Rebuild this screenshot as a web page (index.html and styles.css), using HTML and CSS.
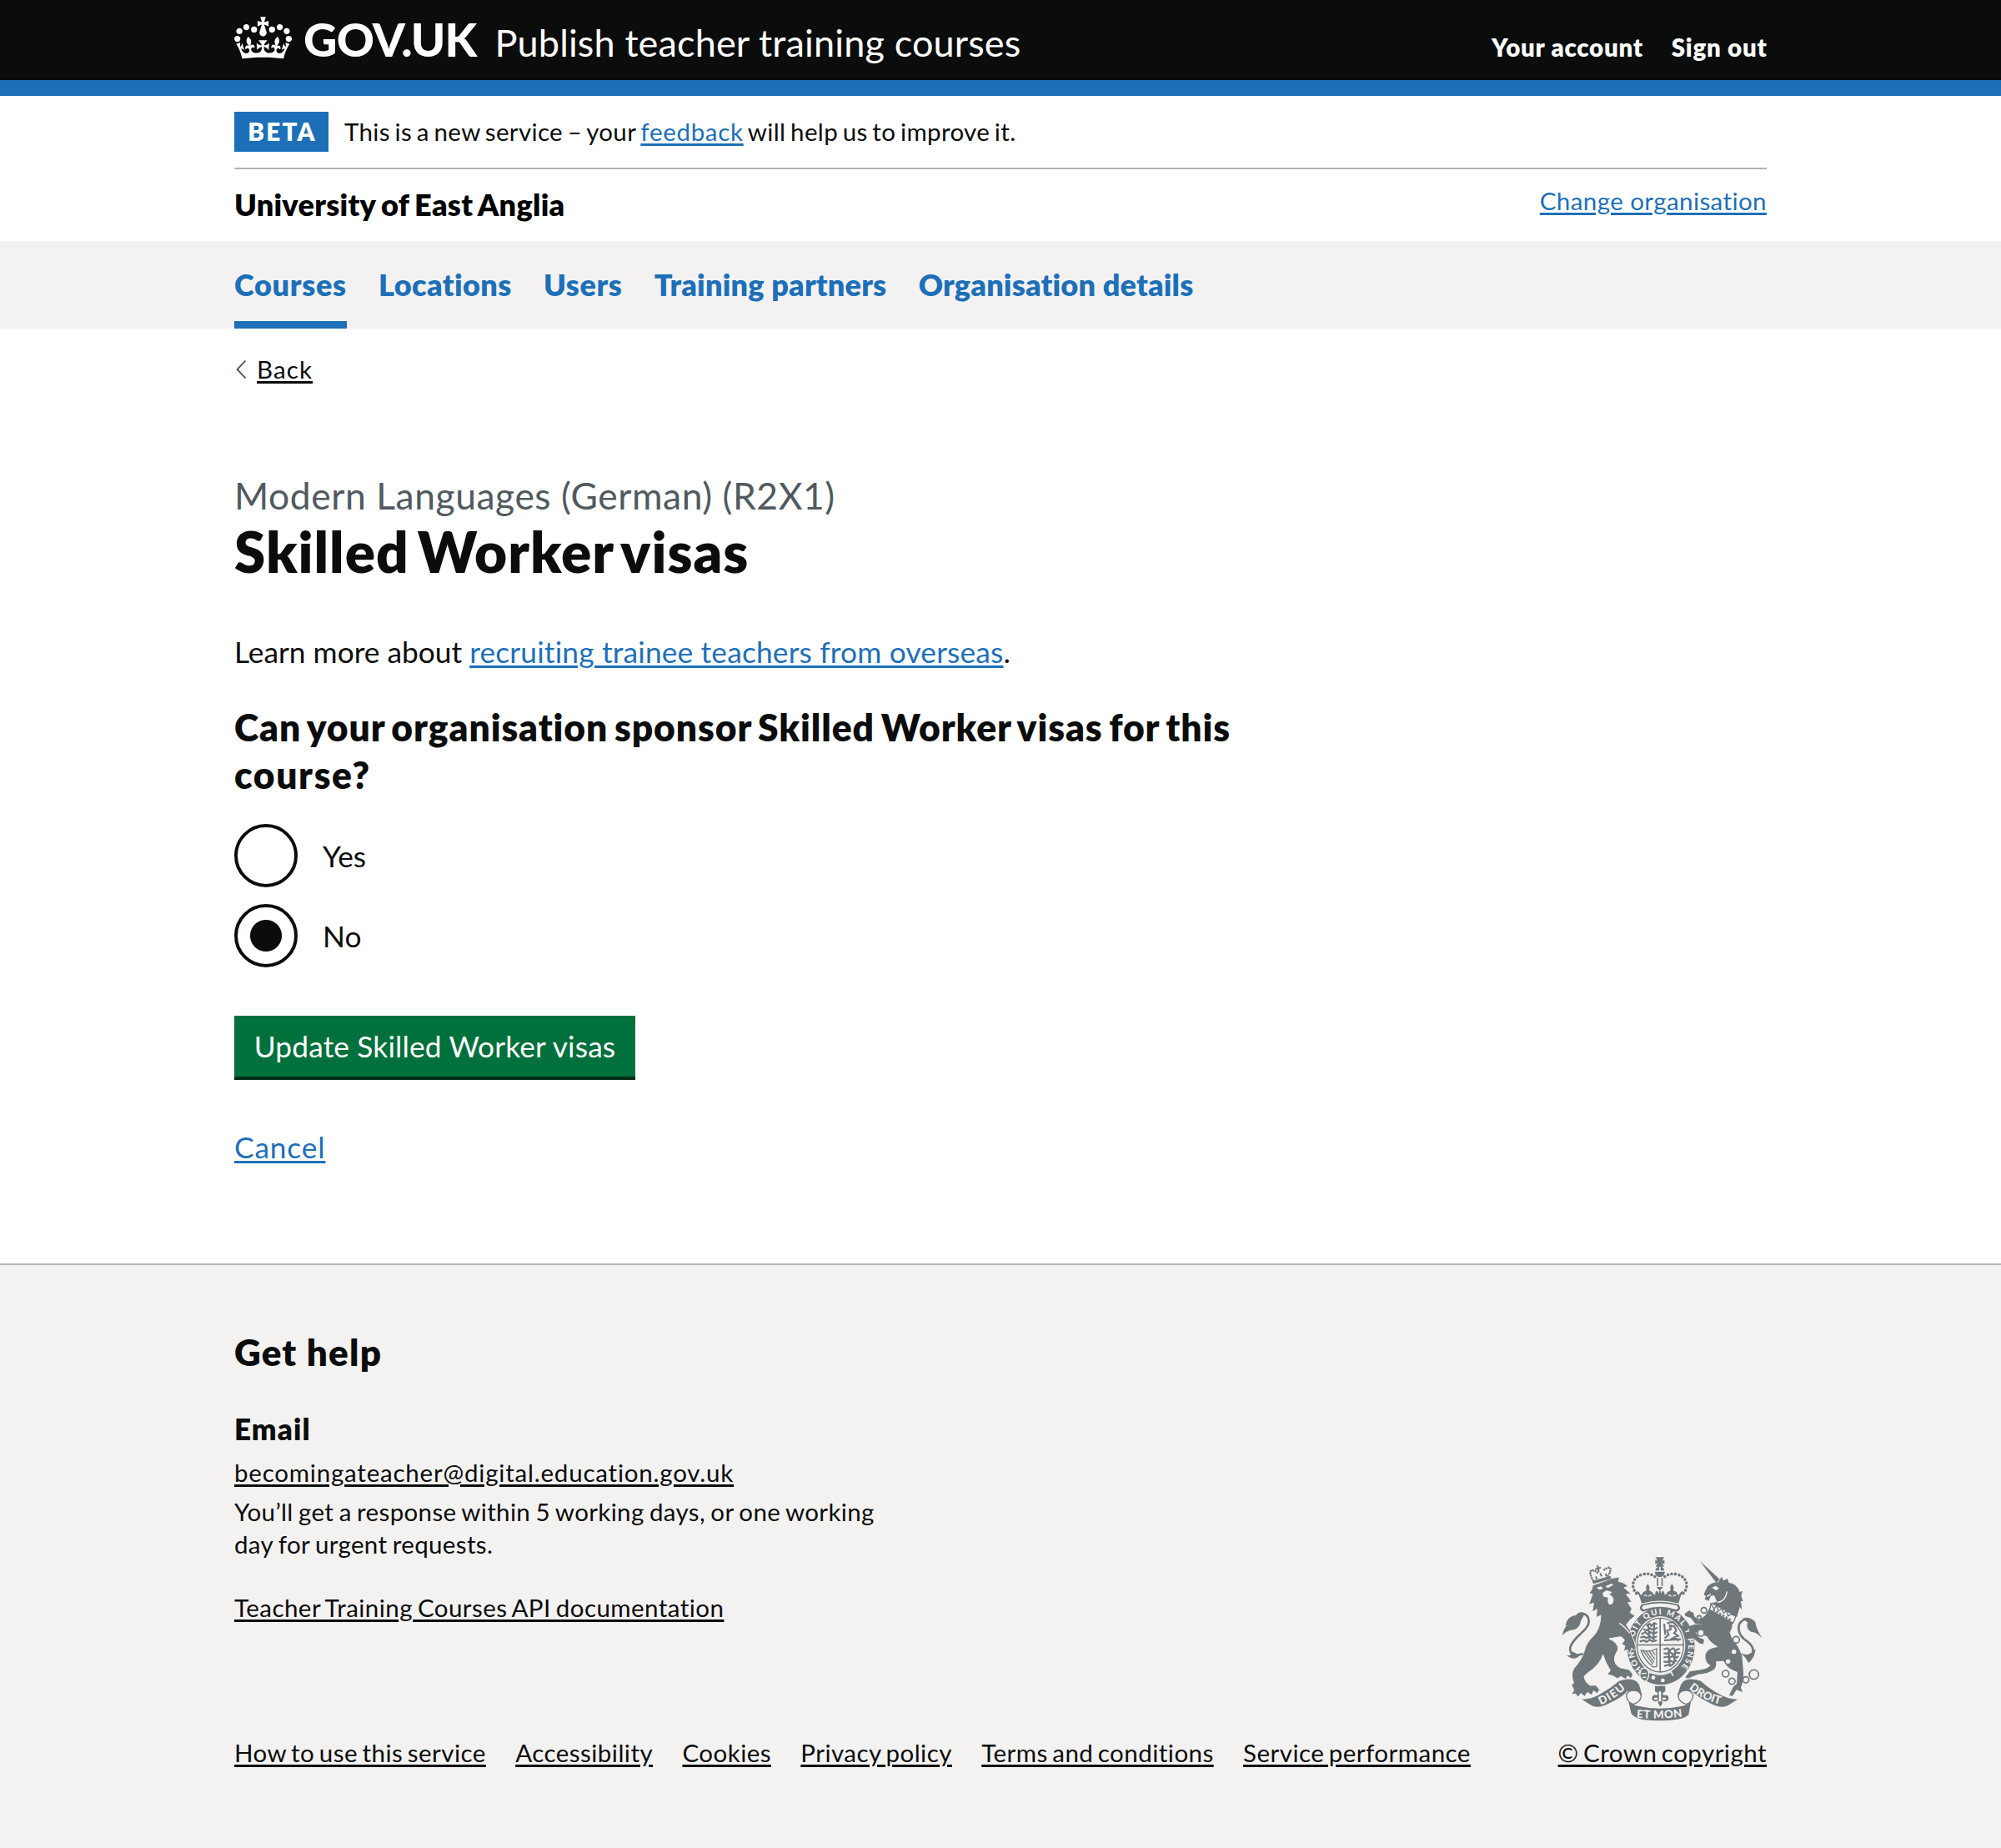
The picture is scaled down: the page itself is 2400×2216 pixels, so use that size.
FILE: index.html
```html
<!DOCTYPE html>
<html lang="en">
<head>
<meta charset="utf-8">
<title>Skilled Worker visas - Publish teacher training courses</title>
<link rel="stylesheet" href="styles.css">
</head>
<body>
<header class="header">
  <div class="container header-inner">
    <svg class="crown" viewBox="0 0 132 97" aria-hidden="true"><path fill="#fff" d="M25 30.2c3.5 1.5 7.7-.2 9.1-3.7 1.5-3.6-.2-7.8-3.9-9.2-3.6-1.4-7.6.3-9.1 3.9-1.4 3.5.3 7.5 3.9 9zM9 39.5c3.6 1.5 7.8-.2 9.2-3.7 1.5-3.6-.2-7.8-3.9-9.1-3.6-1.5-7.6.2-9.1 3.8-1.4 3.5.3 7.5 3.8 9zM4.4 57.2c3.5 1.5 7.7-.2 9.1-3.8 1.5-3.6-.2-7.7-3.9-9.1-3.5-1.5-7.6.3-9.1 3.8-1.4 3.5.3 7.6 3.9 9.1zm38.3-21.4c3.5 1.5 7.7-.2 9.1-3.8 1.5-3.6-.2-7.7-3.9-9.1-3.6-1.5-7.6.3-9.1 3.8-1.3 3.6.4 7.7 3.9 9.1zm64.4-5.6c-3.6 1.5-7.8-.2-9.1-3.7-1.5-3.6.2-7.8 3.8-9.2 3.6-1.4 7.7.3 9.2 3.9 1.3 3.5-.4 7.5-3.9 9zm15.9 9.3c-3.6 1.5-7.7-.2-9.1-3.7-1.5-3.6.2-7.8 3.7-9.1 3.6-1.5 7.7.2 9.2 3.8 1.5 3.5-.3 7.5-3.8 9zm4.7 17.7c-3.6 1.5-7.8-.2-9.2-3.8-1.5-3.6.2-7.7 3.9-9.1 3.6-1.5 7.7.3 9.2 3.8 1.3 3.5-.4 7.6-3.9 9.1zM89.3 35.8c-3.6 1.5-7.8-.2-9.2-3.8-1.4-3.6.2-7.7 3.9-9.1 3.6-1.5 7.7.3 9.2 3.8 1.4 3.6-.3 7.7-3.9 9.1zM69.7 17.7l8.9 4.7V9.3l-8.9 2.8c-.2-.3-.5-.6-.9-.9L72.4 0H59.6l3.5 11.2c-.3.3-.6.5-.9.9l-8.8-2.8v13.1l8.8-4.7c.3.3.6.7.9.9l-5 15.4v.1c-.2.8-.4 1.6-.4 2.4 0 4.1 3.1 7.5 7 8.1h.2c.3 0 .7.1 1 .1.4 0 .7 0 1-.1h.2c4-.6 7.1-4.1 7.1-8.1 0-.8-.1-1.7-.4-2.4V34l-5.1-15.4c.4-.2.7-.6 1-.9zM66 92.8c16.9 0 32.8 1.1 47.1 3.2 4-16.9 8.9-26.7 14-33.5l-9.6-3.4c1 4.9 1.1 7.2 0 10.2-1.5-1.4-3-4.3-4.2-8.7L108.6 76c2.8-2 5-3.2 7.5-3.3-4.4 9.4-10 11.9-13.6 11.2-4.3-.8-6.3-4.6-5.6-7.9 1-4.7 5.7-5.9 8-.5 4.3-8.7-3-11.4-7.6-8.8 7.1-7.2 7.9-13.5 2.1-21.1-8 6.1-8.1 12.3-4.5 20.8-4.7-5.4-12.1-2.5-9.5 6.2 3.4-5.2 7.9-2 7.2 3.1-.6 4.3-6.4 7.8-13.5 7.2-10.3-.9-10.9-8-11.2-13.8 2.5-.5 7.1 1.8 11 7.3L80.2 60c-4.1 4.4-8 5.3-12.3 5.4 1.4-4.4 8-11.6 8-11.6H55.5s6.4 7.2 7.9 11.6c-4.2-.1-8-1-12.3-5.4l1.4 16.4c3.9-5.5 8.5-7.7 10.9-7.3-.3 5.8-.9 12.8-11.1 13.8-7.2.6-12.9-2.9-13.5-7.2-.7-5 3.8-8.3 7.1-3.1 2.7-8.7-4.6-11.6-9.4-6.2 3.7-8.5 3.6-14.7-4.6-20.8-5.8 7.6-5 13.9 2.2 21.1-4.7-2.6-11.9.1-7.7 8.8 2.3-5.5 7.1-4.2 8.1.5.7 3.3-1.3 7.1-5.7 7.9-3.5.7-9-1.8-13.5-11.2 2.5.1 4.7 1.3 7.5 3.3l-4.7-15.4c-1.2 4.4-2.7 7.2-4.3 8.7-1.1-3-.9-5.3 0-10.2l-9.5 3.4c5 6.9 9.9 16.7 14 33.5 14.8-2.1 30.8-3.2 47.7-3.2z"/></svg>
    <span class="logotype">GOV.UK</span>
    <span class="service">Publish teacher training courses</span>
    <nav class="account">
      <a class="account-link" href="#">Your account</a>
      <a class="account-link" href="#">Sign out</a>
    </nav>
  </div>
</header>

<div class="container">
  <div class="phase">
    <strong class="tag">BETA</strong>
    <span class="phase-text">This is a new service – your <a class="link feedback" href="#">feedback</a> will help us to improve it.</span>
  </div>
  <div class="org">
    <span class="org-name">University of East Anglia</span>
    <span class="org-change"><a class="link" href="#">Change organisation</a></span>
  </div>
</div>

<nav class="nav">
  <div class="container nav-list">
    <a class="nav-item current" href="#">Courses</a>
    <a class="nav-item" href="#">Locations</a>
    <a class="nav-item users" href="#">Users</a>
    <a class="nav-item long" href="#">Training partners</a>
    <a class="nav-item long" href="#">Organisation details</a>
  </div>
</nav>

<main class="container main">
  <div class="back">
    <svg class="chevron" viewBox="0 0 14 22" aria-hidden="true"><path d="M13.5.5 3.5 11l10 10.500" fill="none" stroke="#505a5f" stroke-width="1.900"/></svg>
    <a class="link dark" href="#">Back</a>
  </div>
  <div class="caption">Modern Languages (German) (R2X1)</div>
  <h1 class="title">Skilled Worker visas</h1>
  <p class="lead">Learn more about <a class="link guide" href="#">recruiting trainee teachers from overseas</a>.</p>
  <h2 class="question">Can your organisation sponsor Skilled Worker visas for this<br><span class="question-end">course?</span></h2>
  <div class="radios">
    <label class="radio"><span class="dot"></span>Yes</label>
    <label class="radio"><span class="dot checked"></span>No</label>
  </div>
  <button class="button">Update Skilled Worker visas</button>
  <div class="cancel"><a class="link" href="#">Cancel</a></div>
</main>

<footer class="footer">
  <div class="container footer-inner">
    <h2 class="help">Get help</h2>
    <h3 class="email-title">Email</h3>
    <div class="small email"><a class="link dark" href="#">becomingateacher@digital.education.gov.uk</a></div>
    <p class="small response">You’ll get a response within 5 working days, or one working<br>day for urgent requests.</p>
    <div class="small api"><a class="link dark" href="#">Teacher Training Courses API documentation</a></div>
    <div class="meta">
      <div class="small meta-links">
        <a class="link dark" href="#">How to use this service</a>
        <a class="link dark" href="#">Accessibility</a>
        <a class="link dark" href="#">Cookies</a>
        <a class="link dark" href="#">Privacy policy</a>
        <a class="link dark" href="#">Terms and conditions</a>
        <a class="link dark" href="#">Service performance</a>
      </div>
      <div class="small crest">
        <svg class="arms" viewBox="42 50 720 590" aria-hidden="true">
          <defs>
            <path id="motto" d="M332.400 458.300A99 114 0 1 1 459.600 458.300"/>
            <path id="dieu" d="M179 582Q230 563 279 515"/>
            <path id="mon" d="M308 628Q392 636 482 624"/>
            <path id="droit" d="M497 524Q550 568 618 582"/>
          </defs>
          <!-- imperial crown -->
          <g fill="#6f777b">
            <path d="M377 51h31l-8 14 9-5v16l-9-5 8 14h-31l8-14-9 5V60l9 5z"/>
            <path d="M390 84v15h-14q2-11 14-15zM395 84v15h14q-2-11-14-15zM374 103h37q-2 17-18 20-17-3-19-20z"/>
            <path d="M382 125h5v30h-5zM398 125h5v30h-5z"/>
            <path d="M308 172Q322 176 324 188Q332 184 332 176Q342 174 345 168Q338 160 349 147Q360 160 353 168Q356 174 366 176Q366 184 376 186Q374 172 384 172L388 182L391 170L380 158H404L394 170L397 182L401 172Q411 172 409 186Q419 184 419 176Q429 174 432 168Q425 160 436 147Q447 160 440 168Q443 174 453 176Q453 184 461 188Q463 176 477 172Q466 190 460 217Q392 198 327 217Q320 190 308 172Z"/>
            <path fill-rule="evenodd" d="M326 221Q392 202 460 221L466 232Q464 246 450 246Q392 226 336 246Q322 246 320 232ZM332 225L328 232Q330 240 336 239Q392 219 450 239Q456 240 458 232L454 225Q392 208 332 225Z"/>
          </g>
          <path d="M336 190q6-6 10 2M352 192q6-8 10-2M423 190q6-6 10 2M440 192q6-8 10-2" fill="none" stroke="#f3f2f1" stroke-width="4"/>
          <g fill="none" stroke="#6f777b" stroke-width="11" stroke-linecap="round" stroke-dasharray="0 13.500">
            <path d="M308 181C284 153 298 120 332 112Q362 106 380 126"/>
            <path d="M477 181C501 153 487 120 453 112Q423 106 405 126"/>
          </g>
          <!-- garter and shield -->
          <ellipse cx="396" cy="371" rx="122" ry="139" fill="#6f777b"/>
          <ellipse cx="394" cy="367" rx="90" ry="104" fill="#f3f2f1"/>
          <g fill="none" stroke="#6f777b" stroke-width="4">
            <ellipse cx="394" cy="367" rx="84" ry="97"/>
            <path d="M393.500 270v194M310 366.500h168" stroke-width="5"/>
            <g stroke-width="6.500">
              <path d="M344 298l12-8 6 8 10-10 10 4M332 310l14 4 10-8 12 6 16-8M326 328l14-8 8 8 12-8 8 6 16-6M322 340l14-4 8 6 12-8 10 8 16-6M320 354l16-4 8 6 12-8 10 6 16-4M350 290l6 60M372 290l-2 60"/>
              <path d="M408 350l60-4M410 342l14-12-6-14 14-6-4-14 16 4 8 14-8 10 14 10-12 4 8 10-16-6-10 8M408 290l4 40M418 288l22-4 18 18"/>
              <path d="M406 382l14-4 8 8 12-8 8 8 16-6M406 396l12 2 10-6 12 8 12-6 14 2M406 412l12-4 8 6 12-8 8 8 14-6M406 426l12 2 10-6 12 6 14-6M408 442l14-4 8 4 12-8M424 384l4 56M448 384l-4 50"/>
            </g>
            <path d="M325 386q10 34 44 60l12-2V380q-28 14-56 6z"/>
            <path d="M334 390l34 46M344 391l28 38M354 389l20 28M364 387l12 16"/>
          </g>
          <text class="arms-text ring"><textPath href="#motto" textLength="512">HONI SOIT QUI MAL Y PENSE</textPath></text>
          <path d="M326 452Q344 444 352 462Q356 486 340 498Q322 494 320 472Z" fill="#6f777b" stroke="#f3f2f1" stroke-width="4"/>
          <path d="M326 470l18-2M330 484l14-2" fill="none" stroke="#f3f2f1" stroke-width="4"/>
          <path d="M350 462Q400 484 432 462L440 478" fill="none" stroke="#f3f2f1" stroke-width="5"/>
          <circle cx="369" cy="484" r="7" fill="#f3f2f1"/><circle cx="403" cy="494" r="7" fill="#f3f2f1"/>
          <!-- lion -->
          <path fill="#6f777b" stroke="#f3f2f1" stroke-width="3" d="M150 152L222 126L248 122L244 138L260 142L280 156L264 160L290 184L272 184L292 212L278 214L292 236L286 250L304 262L286 276L272 294Q288 312 293 336Q302 352 307 378L299 386L291 378L285 397L275 384L261 390L267 370L255 363L265 350Q256 334 244 338L210 344Q244 358 242 384Q226 408 230 426Q238 448 258 450L282 455L296 472L289 488L277 478L270 490L252 480L240 488L224 478L203 473L214 458Q196 430 188 402Q176 440 132 468L120 480Q124 502 142 512L162 511L176 528L167 541L154 532L148 548L132 537L122 552L108 541L99 554L88 542L74 546L83 528L74 510L82 504Q70 468 84 450Q112 418 120 390Q128 356 152 336Q178 310 180 260L163 268L166 238L149 248L154 216L136 222L150 184L137 180Q150 170 150 152Z"/>
          <path d="M164 160l18-4 6 8-12 4zM196 156l22-10 8 4-20 12zM186 180l14-10 20 6-4 6h-8q18 10 18 24-2 16-14 16-10-6-6-24-6-6-16-4z" fill="#f3f2f1"/>
          <path d="M246 288Q266 300 284 324" fill="none" stroke="#f3f2f1" stroke-width="4"/>
          <path d="M149 136L214 118L218 128L153 147Z" fill="#6f777b"/>
          <g fill="none" stroke="#6f777b" stroke-width="6">
            <path d="M152 134Q136 106 146 98Q160 98 170 108M206 118Q220 96 212 88Q200 88 188 100" stroke-width="8" stroke-linecap="round" stroke-dasharray="0 9"/>
            <path d="M168 80l5 24M160 94l20-6M178 108l5 12M162 120l4 10M198 110l2 10"/>
          </g>
          <path d="M116 398Q66 414 70 376C80 336 136 316 137 282Q135 252 108 254" fill="none" stroke="#6f777b" stroke-width="8"/>
          <path d="M120 250Q100 244 90 260Q60 262 52 298L62 294Q46 304 42 332Q60 312 84 312Q106 302 108 280L118 262ZM56 404Q76 408 78 390L104 404Q86 426 56 404Z" fill="#6f777b"/>
          <!-- unicorn -->
          <g fill="#6f777b">
            <path d="M536 64L608 130L596 144Z"/>
            <path d="M550 186Q556 172 564 156Q580 140 602 142L614 121L622 135L636 128L640 142Q670 146 680 176L690 172L685 190L692 208L684 210L688 240L680 230L670 266L574 216L598 212L588 188L576 190L568 208L554 202L558 190Z"/>
            <path d="M572 234L654 288Q654 306 644 322Q652 350 672 370L688 404L692 452L694 490L684 520L690 536L668 528L654 550L642 548L656 518L669 506L672 464Q634 452 622 424L594 426Q598 444 588 454Q566 470 530 472L494 487L484 483L500 462L520 459Q566 454 574 440Q556 430 556 406Q560 378 602 374Q572 356 562 336L520 320L534 340L552 348L548 364L534 360L512 342L499 320L495 300L520 292L550 292L520 290L504 270L484 262L482 254L498 243L514 252L516 262L532 280L556 260Z"/>
            <path d="M690 270Q716 262 736 284Q738 306 760 342Q738 318 722 320Q700 308 708 286ZM684 396Q712 412 736 380Q738 406 712 432L700 412Z"/>
          </g>
          <path d="M580 160l14-6 12 10-12 6z" fill="#f3f2f1"/>
          <path d="M634 174Q630 208 600 214M562 192l14-8" fill="none" stroke="#f3f2f1" stroke-width="4"/>
          <path d="M576 218L588 236L596 226L604 244L615 236L622 252L634 244L638 262L650 256L666 264L656 288L572 240Z" fill="#f3f2f1" stroke="#6f777b" stroke-width="4"/>
          <path d="M584 240L650 278" stroke="#6f777b" stroke-width="7" stroke-dasharray="8 5"/>
          <path d="M700 274C668 284 670 320 694 344C722 362 732 376 726 392" fill="none" stroke="#6f777b" stroke-width="8"/>
          <g fill="none" stroke="#6f777b" stroke-width="5">
            <circle cx="551" cy="242" r="10"/><circle cx="534" cy="268" r="7"/><circle cx="540" cy="323" r="12" fill="#f3f2f1"/><circle cx="667" cy="348" r="12" fill="#f3f2f1"/>
            <circle cx="629" cy="470" r="12"/><circle cx="652" cy="497" r="11"/><circle cx="702" cy="492" r="11"/><circle cx="731" cy="473" r="17"/>
          </g>
          <g fill="#f3f2f1"><circle cx="659" cy="391" r="8"/><circle cx="638" cy="426" r="8"/></g>
          <!-- scroll and fleur-de-lis -->
          <g fill="#6f777b">
            <path d="M112 562Q148 562 176 544Q214 524 246 496Q302 478 318 510L328 546L300 566Q296 536 276 532Q256 556 214 574Q172 598 146 584Z"/>
            <path d="M672 562Q638 562 608 544Q570 524 540 496Q482 478 468 510L456 546L486 566Q490 536 508 532Q530 556 570 574Q612 598 638 584Z"/>
            <path d="M280 572Q296 584 314 586Q392 604 474 586Q490 584 504 572L496 618Q480 632 456 634Q392 644 326 634Q300 628 290 614Z"/>
            <path d="M375 514h37v20l-10 6 4 8q14-6 18 8 0 14-16 14l-8-4 2 10-8 13-8-13 2-10-10 4q-14-2-14-14 4-14 18-8l4-8-11-6z"/>
          </g>
          <g fill="#f3f2f1" stroke="#6f777b" stroke-width="4">
            <path d="M272 546Q282 524 310 532Q328 540 324 558Q318 574 296 580Q272 570 272 546Z"/>
            <path d="M512 546Q502 524 474 532Q456 540 460 558Q466 574 488 580Q512 570 512 546Z"/>
          </g>
          <path d="M372 556h12v8h-12zM402 556h12v8h-12zM389 534h8v36h-8z" fill="#f3f2f1"/>
          <text class="arms-text"><textPath href="#dieu" textLength="108">DIEU</textPath></text>
          <text class="arms-text"><textPath href="#mon" textLength="166">ET MON</textPath></text>
          <text class="arms-text"><textPath href="#droit" textLength="126">DROIT</textPath></text>
        </svg>
        <a class="link dark" href="#">© Crown copyright</a>
      </div>
    </div>
  </div>
</footer>
</body>
</html>
```
FILE: styles.css
```css
* { box-sizing: border-box; }
body { margin: 0; font-family: Lato, "Liberation Sans", sans-serif; font-variant-ligatures: none; color: #0b0c0c; background: #fff; font-size: 35.3px; }
h1, h2, h3, p { margin: 0; }
h1, h2, h3 { font-weight: 800; }
.container { margin: 0 281px; }
.link { color: #1d70b8; text-decoration: underline; text-decoration-thickness: 2.5px; text-underline-offset: 2.5px; }
.link.dark { color: #0b0c0c; }

.header { background: #0b0c0c; height: 115px; border-bottom: 19px solid #1d70b8; color: #fff; }
.header-inner { display: flex; align-items: flex-start; }
.crown { width: 69px; height: 51px; margin-top: 20px; }
.logotype { font-size: 55.8px; line-height: 56px; font-weight: 900; letter-spacing: -.8px; padding: 18.5px 0 0 14px; }
.service { font-size: 45px; line-height: 45px; letter-spacing: .15px; padding: 29px 0 0 22px; }
.account { display: flex; gap: 34px; margin-left: auto; margin-right: -.5px; padding-top: 42px; }
.account-link { color: #fff; text-decoration: none; font-weight: 800; font-size: 29.5px; line-height: 30px; letter-spacing: .72px; }

.phase { display: flex; padding: 19px 0; border-bottom: 2px solid #b1b4b6; font-size: 29.5px; line-height: 48px; }
.tag { background: #1d70b8; color: #fff; width: 113px; text-align: center; height: 48px; font-weight: 800; letter-spacing: 2.3px; text-indent: 2px; }
.phase-text { margin-left: 19px; letter-spacing: .35px; word-spacing: -2.2px; }
.feedback { letter-spacing: .7px; }
.org { display: flex; justify-content: space-between; height: 86px; line-height: 40px; }
.org-name { font-size: 36px; font-weight: 800; letter-spacing: .3px; word-spacing: -2px; padding-top: 22px; color: #000; }
.org-change { font-size: 29.5px; letter-spacing: .42px; padding-top: 18px; }

.nav { background: #f3f2f1; height: 105px; }
.nav-list { display: flex; gap: 38.3px; height: 105px; }
.nav-item { color: #1d70b8; font-size: 36px; font-weight: 800; letter-spacing: .4px; text-decoration: none; line-height: 40px; padding-top: 32px; }
.current { border-bottom: 9px solid #1d70b8; letter-spacing: .7px; }
.users { letter-spacing: .6px; }
.long { letter-spacing: .2px; }

.main { height: 1121px; }
.back { display: flex; align-items: center; gap: 13px; padding-top: 29px; font-size: 29.5px; line-height: 40px; letter-spacing: 1.1px; }
.chevron { width: 14px; height: 22px; }
.caption { margin-top: 102px; font-size: 44.4px; line-height: 57px; letter-spacing: .56px; color: #505a5f; }
.title { margin-top: 1px; font-size: 67.4px; line-height: 76px; letter-spacing: 1px; word-spacing: -6.5px; }
.lead { margin-top: 59px; line-height: 48px; }
.guide { letter-spacing: .18px; }
.question { margin-top: 37px; font-size: 44.4px; line-height: 57px; letter-spacing: .92px; word-spacing: -3.5px; }
.question-end { letter-spacing: 1.6px; }
.radios { display: flex; flex-direction: column; gap: 20px; margin-top: 31px; }
.radio { display: flex; align-items: center; height: 76px; gap: 30px; }
.dot { width: 76px; height: 76px; border: 4px solid #0b0c0c; border-radius: 50%; }
.checked { background: radial-gradient(circle closest-side, #0b0c0c 18.5px, #fff 19.5px); }
.button { margin-top: 58px; height: 73px; width: 481px; border: 0; background: #00703c; box-shadow: 0 4px 0 #002d18; color: #fff; font: inherit; letter-spacing: .15px; display: block; padding: 0; }
.cancel { margin-top: 61px; line-height: 48px; letter-spacing: .85px; }

.footer { background: #f3f2f1; border-top: 2px solid #b1b4b6; height: 701px; }
.footer-inner { padding-top: 75.5px; }
.help { font-size: 44px; line-height: 57px; letter-spacing: 1.2px; }
.email-title { margin-top: 39px; font-size: 35px; line-height: 48px; letter-spacing: 1.1px; }
.small { font-size: 29.5px; line-height: 38.5px; }
.email { margin-top: 10px; letter-spacing: .79px; }
.response { margin-top: 9px; letter-spacing: .35px; word-spacing: -1.5px; }
.api { margin-top: 38px; letter-spacing: .45px; word-spacing: -2px; }
.meta { display: flex; justify-content: space-between; align-items: flex-end; margin-top: -80.5px; letter-spacing: .47px; word-spacing: -2.5px; }
.meta-links { display: flex; gap: 35.3px; }
.crest { display: flex; flex-direction: column; align-items: center; }
.arms { width: 240px; height: 196.7px; margin-bottom: 19px; }
.arms-text { font-family: Lato, sans-serif; font-size: 40px; font-weight: 900; fill: #f3f2f1; letter-spacing: 0; word-spacing: 0; }
.ring { font-size: 29px; }
```
